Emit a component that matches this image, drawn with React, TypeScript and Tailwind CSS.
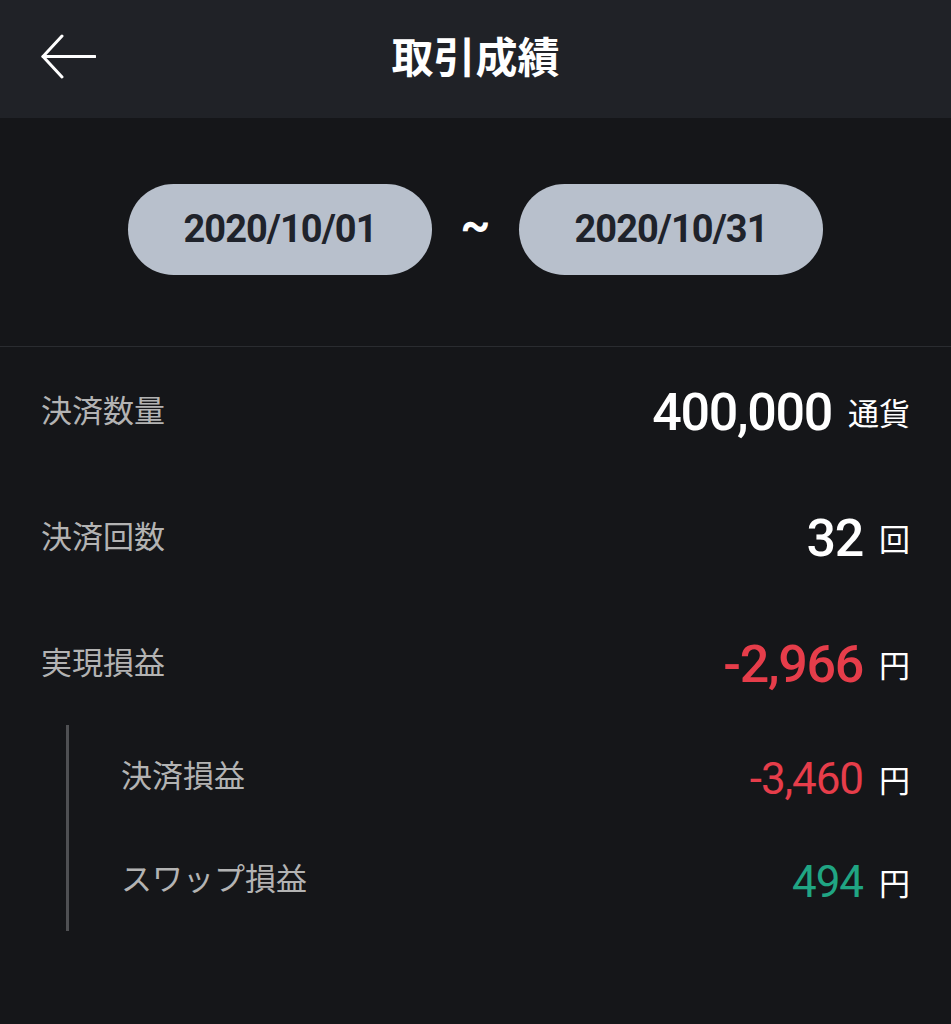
import React from "react";

type Row = {
  label: string;
  value: string;
  unit: string;
  color: string;
};

const mainRows: Row[] = [
  { label: "決済数量", value: "400,000", unit: "通貨", color: "text-white" },
  { label: "決済回数", value: "32", unit: "回", color: "text-white" },
  { label: "実現損益", value: "-2,966", unit: "円", color: "text-[#e63d4a]" },
];

const subRows: Row[] = [
  { label: "決済損益", value: "-3,460", unit: "円", color: "text-[#e63d4a]" },
  { label: "スワップ損益", value: "494", unit: "円", color: "text-[#20a583]" },
];

const jp = "font-['Roboto','Noto_Sans_CJK_JP',sans-serif]";

const BackArrow = () => (
  <svg width="56" height="46" viewBox="0 0 56 46" fill="none">
    <path d="M3 22.5H55" stroke="white" strokeWidth="3" strokeLinecap="round" />
    <path d="M22 2L3 22.5L22 43" stroke="white" strokeWidth="3" strokeLinecap="round" strokeLinejoin="round" />
  </svg>
);

const DatePill = ({ date }: { date: string }) => (
  <button className="w-[304px] h-[91px] rounded-full bg-[#b8c0cc] flex items-center justify-center text-[38px] font-bold text-[#1f232b] tracking-tight">
    {date}
  </button>
);

export default function App() {
  return (
    <div className={`w-[951px] min-h-screen bg-[#151619] ${jp}`}>
      {/* Header */}
      <div className="h-[118px] bg-[#202227] grid grid-cols-[1fr_auto_1fr] items-center px-[40px]">
        <div className="flex items-center pb-[4px]">
          <BackArrow />
        </div>
        <h1 className="text-[42px] font-bold text-white font-['Noto_Sans_CJK_JP',sans-serif] pb-[10px]">取引成績</h1>
        <div />
      </div>

      {/* Date range */}
      <div className="h-[229px] pt-[66px] border-b border-[#2a2c30] flex justify-center gap-[29px] items-start">
        <DatePill date="2020/10/01" />
        <span className="w-[29px] h-[91px] flex items-center justify-center text-white text-[46px] font-bold pb-[8px]">~</span>
        <DatePill date="2020/10/31" />
      </div>

      {/* Summary */}
      <div className="px-[41px]">
        {mainRows.map((r) => (
          <div key={r.label} className="h-[126px] flex items-center justify-between">
            <span className="text-[31px] text-[#b3b3b3] font-['Noto_Sans_CJK_JP',sans-serif] pb-[2px]">{r.label}</span>
            <span className="flex items-center gap-[16px] pt-[6px]">
              <span className={`text-[52px] font-medium tracking-tight leading-none ${r.color}`}>{r.value}</span>
              <span className="text-[31px] text-white leading-none font-['Noto_Sans_CJK_JP',sans-serif] pb-[4px]">{r.unit}</span>
            </span>
          </div>
        ))}

        <div className="mt-[3px] ml-[25px] border-l-[3px] border-[#4f5053] pl-[52px]">
          {subRows.map((r, i) => (
            <div key={r.label} className={`h-[103px] flex items-center justify-between ${i === 0 ? "-mt-[3px]" : ""}`}>
              <span className="text-[31px] text-[#b3b3b3] font-['Noto_Sans_CJK_JP',sans-serif] pb-[4px]">{r.label}</span>
              <span className="flex items-center gap-[16px] pt-[4px]">
                <span className={`text-[44px] tracking-tight leading-none ${r.color}`}>{r.value}</span>
                <span className="text-[31px] text-white leading-none font-['Noto_Sans_CJK_JP',sans-serif]">{r.unit}</span>
              </span>
            </div>
          ))}
        </div>
      </div>
    </div>
  );
}
